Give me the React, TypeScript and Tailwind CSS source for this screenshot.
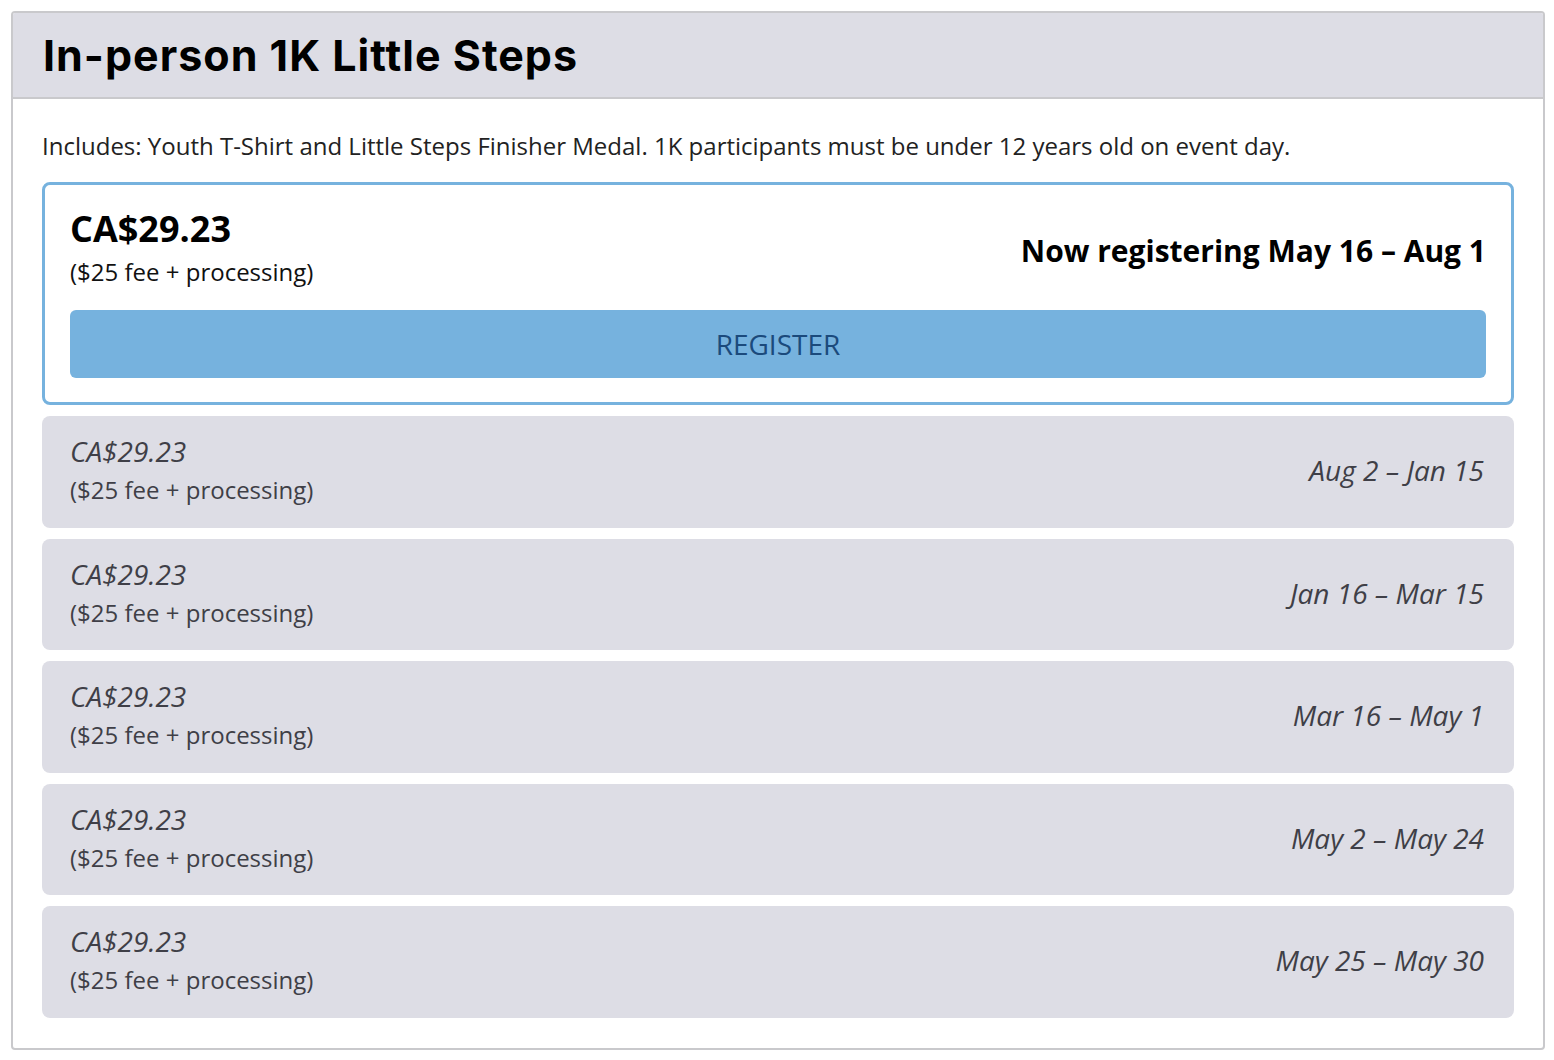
import React from "react";

type Tier = { price: string; note: string; dates: string };

const upcoming: Tier[] = [
  { price: "CA$29.23", note: "($25 fee + processing)", dates: "Aug 2 – Jan 15" },
  { price: "CA$29.23", note: "($25 fee + processing)", dates: "Jan 16 – Mar 15" },
  { price: "CA$29.23", note: "($25 fee + processing)", dates: "Mar 16 – May 1" },
  { price: "CA$29.23", note: "($25 fee + processing)", dates: "May 2 – May 24" },
  { price: "CA$29.23", note: "($25 fee + processing)", dates: "May 25 – May 30" },
];

const body = "font-['Open_Sans','Liberation_Sans',sans-serif]";

const CurrentTier = () => (
  <div className="rounded-[8px] border-[3px] border-[#76b2de] bg-white px-[25px] pt-[22px] pb-[24px]">
    <div className="flex items-center justify-between">
      <div>
        <div className="text-[36px] font-bold leading-[44px] text-black">CA$29.23</div>
        <div className="mt-[6px] text-[24px] leading-[30px] text-[#111]">($25 fee + processing)</div>
      </div>
      <div className="pt-[6px] text-[30px] font-bold text-black">Now registering May 16 – Aug 1</div>
    </div>
    <button className="mt-[23px] flex h-[68px] w-full items-center justify-center rounded-[6px] bg-[#76b2de] text-[28px] text-[#1b4a7c]">
      REGISTER
    </button>
  </div>
);

const FutureTier = ({ tier }: { tier: Tier }) => (
  <div className="flex items-center justify-between rounded-[8px] bg-[#dddde5] pl-[28px] pr-[30px] pt-[19px] pb-[22.5px] text-[#3f3f47]">
    <div>
      <div className="text-[28px] italic leading-[32px]">{tier.price}</div>
      <div className="mt-[8px] text-[24px] leading-[30px]">{tier.note}</div>
    </div>
    <div className="text-[28px] italic">{tier.dates}</div>
  </div>
);

export default function App() {
  return (
    <div className={`min-h-screen bg-white pt-[11px] pr-[9px] pb-[11px] pl-[11px] ${body}`}>
      <div className="overflow-hidden rounded-[4px] border-2 border-[#c9c9cc] bg-white">
        <div className="flex h-[86px] items-center border-b-2 border-[#c9c9cc] bg-[#dddde5] px-[30px]">
          <h1 className="font-['Inter',sans-serif] text-[43px] font-bold tracking-[1px] text-black">
            In-person 1K Little Steps
          </h1>
        </div>
        <div className="px-[29px] pt-[32px] pb-[30px]">
          <p className="text-[24px] leading-[30px] text-[#222]">
            Includes: Youth T-Shirt and Little Steps Finisher Medal. 1K participants must be under 12 years old on event day.
          </p>
          <div className="mt-[21px] flex flex-col gap-[11px]">
            <CurrentTier />
            {upcoming.map((t) => (
              <FutureTier key={t.dates} tier={t} />
            ))}
          </div>
        </div>
      </div>
    </div>
  );
}
